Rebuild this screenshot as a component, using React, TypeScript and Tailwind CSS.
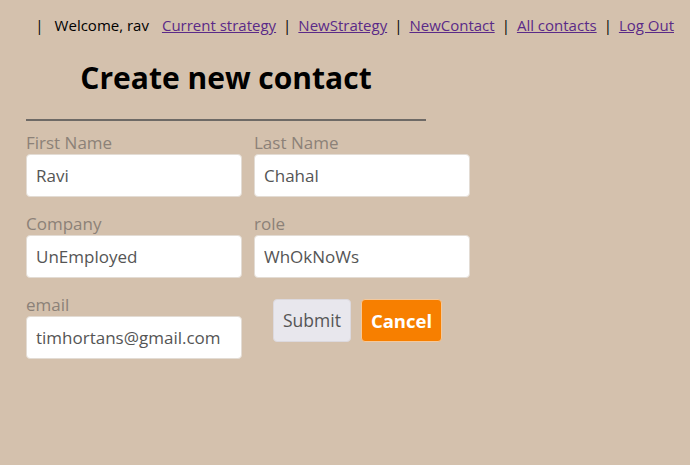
import React from 'react';

const NavLink: React.FC<{ label: string }> = ({ label }) => (
  <a href="#" className="text-[#5a2a88] underline">{label}</a>
);

const Field: React.FC<{ label: string; value: string }> = ({ label, value }) => (
  <div className="flex flex-col w-[216px]">
    <label className="mb-[3px] text-[17px] leading-[17px] text-[#8c8178]">{label}</label>
    <input
      readOnly
      value={value}
      className="h-[43px] w-full rounded-[4px] border border-[#e3dcd4] bg-white px-[9px] text-[17px] text-[#555] outline-none"
    />
  </div>
);

const App: React.FC = () => {
  const links = ['Current strategy', 'NewStrategy', 'NewContact', 'All contacts', 'Log Out'];

  return (
    <div
      className="min-h-[465px] w-full bg-[#d4c1ad] text-black"
      style={{ fontFamily: '"Open Sans", "Noto Sans", sans-serif' }}
    >
      {/* Top nav */}
      <div className="flex justify-end pr-[16px] pt-[14px] text-[15px] leading-[22px]">
        <span className="mr-[11px]">|</span>
        <span className="mr-[13px]">Welcome, rav</span>
        {links.map((l, i) => (
          <React.Fragment key={l}>
            <NavLink label={l} />
            {i < links.length - 1 && <span className="mx-[7px]">|</span>}
          </React.Fragment>
        ))}
      </div>

      <div className="pl-[26px]">
        <div className="w-[400px]">
          <h1 className="mt-[24px] text-center text-[30px] font-bold leading-[36px]">Create new contact</h1>
          <hr className="mt-[23px] border-0 border-t-2 border-[#6e6a66]" />
        </div>

        {/* Form */}
        <div className="mt-[13px] flex flex-col gap-[18px]">
          <div className="flex gap-[12px]">
            <Field label="First Name" value="Ravi" />
            <Field label="Last Name" value="Chahal" />
          </div>
          <div className="flex gap-[12px]">
            <Field label="Company" value="UnEmployed" />
            <Field label="role" value="WhOkNoWs" />
          </div>
          <div className="flex gap-[12px]">
            <Field label="email" value="timhortans@gmail.com" />
            <div className="ml-[19px] flex items-start gap-[10px] pt-[3px]">
              <button className="h-[43px] rounded-[4px] border border-[#dcd9de] bg-[#e8e7ed] px-[9px] text-[17.5px] text-[#555]">
                Submit
              </button>
              <button className="h-[43px] rounded-[4px] border border-[#f5c89a] bg-[#f77f00] px-[9px] text-[18.5px] font-bold text-white">
                Cancel
              </button>
            </div>
          </div>
        </div>
      </div>
    </div>
  );
};

export default App;
